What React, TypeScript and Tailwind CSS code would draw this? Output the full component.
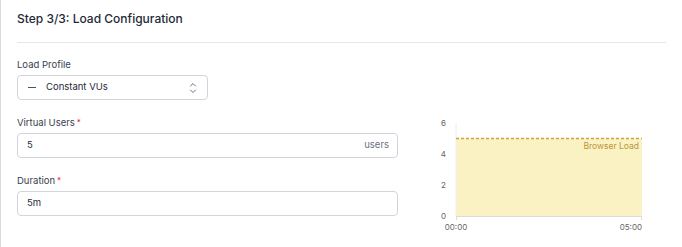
import React from "react";

function ChevronsUpDown() {
  return (
    <svg width="8" height="12" viewBox="0 0 8 12" fill="none" stroke="#6b7280" strokeWidth="1" strokeLinecap="round" strokeLinejoin="round">
      <path d="M1.5 4 L4 1.5 L6.5 4" />
      <path d="M1.5 8 L4 10.5 L6.5 8" />
    </svg>
  );
}

function Chart() {
  const left = 21;
  const right = 207;
  const y = (v: number) => 103 - v * 15.5;
  return (
    <svg width="215" height="122" viewBox="0 0 215 122" className="block">
      <rect x={left} y={y(5)} width={right - left} height={y(0) - y(5)} fill="#fbf2c4" />
      <line x1={left} y1={y(6)} x2={left} y2={y(0)} stroke="#eeeeee" strokeWidth="1" />
      <line x1={left} y1={y(5)} x2={right} y2={y(5)} stroke="#c9a43f" strokeWidth="1.5" strokeDasharray="3 2" />
      <line x1={left} y1={y(0) + 0.5} x2={right} y2={y(0) + 0.5} stroke="#dcdcdc" strokeWidth="1" />
      <line x1={left + 0.5} y1={y(0)} x2={left + 0.5} y2={y(0) + 4} stroke="#dcdcdc" strokeWidth="1" />
      <line x1={right - 0.5} y1={y(0)} x2={right - 0.5} y2={y(0) + 4} stroke="#dcdcdc" strokeWidth="1" />
      <g fill="#666666" fontSize="8" fontFamily="Inter, sans-serif">
        {[6, 4, 2, 0].map((v) => (
          <text key={v} x={11} y={y(v) + 3} textAnchor="end">
            {v}
          </text>
        ))}
        <text x={left} y={117} textAnchor="middle">00:00</text>
        <text x={right} y={117} textAnchor="end">05:00</text>
      </g>
      <text x={204} y={36} textAnchor="end" fill="#b8963a" fontSize="8.5" fontFamily="Inter, sans-serif">
        Browser Load
      </text>
    </svg>
  );
}

function Label({ text, required }: { text: string; required?: boolean }) {
  return (
    <div className="text-[9.5px] leading-[12px] text-[#374151] mb-[4px] flex items-start">
      <span>{text}</span>
      {required && <span className="text-[#dc2626] ml-[2px] text-[8px] leading-[10px]">*</span>}
    </div>
  );
}

export default function App() {
  return (
    <div className="w-[682px] h-[247px] bg-white border-l border-[#d9d9d9] pl-4 pr-4 font-['Inter',sans-serif] text-[#1f2937] overflow-hidden">
      <h2 className="pt-[11px] text-[12px] leading-4 font-medium text-[#1f2937]">Step 3/3: Load Configuration</h2>
      <div className="mt-[15px] border-t border-[#e5e7eb]" />
      <div className="flex mt-[16px]">
        <div className="w-[381px] flex flex-col">
          <Label text="Load Profile" />
          <div className="w-[191px] h-[25px] border border-[#d1d5db] rounded-[4px] flex items-center pl-[10px] pr-[10px]">
            <span className="w-[8px] h-[1.5px] bg-[#4b5563] mr-[10px]" />
            <span className="text-[9.5px] text-[#1f2937] flex-1">Constant VUs</span>
            <ChevronsUpDown />
          </div>
          <div className="mt-[17px]">
            <Label text="Virtual Users" required />
            <div className="h-[25px] border border-[#d1d5db] rounded-[4px] flex items-center pl-[9px] pr-[8px]">
              <span className="text-[9.5px] text-[#1f2937] flex-1">5</span>
              <span className="text-[9.5px] text-[#6b7280]">users</span>
            </div>
          </div>
          <div className="mt-[17px]">
            <Label text="Duration" required />
            <div className="h-[25px] border border-[#d1d5db] rounded-[4px] flex items-center pl-[9px] pr-[8px]">
              <span className="text-[9.5px] text-[#1f2937] flex-1">5m</span>
            </div>
          </div>
        </div>
        <div className="ml-[37px] mt-[54px]">
          <Chart />
        </div>
      </div>
    </div>
  );
}
